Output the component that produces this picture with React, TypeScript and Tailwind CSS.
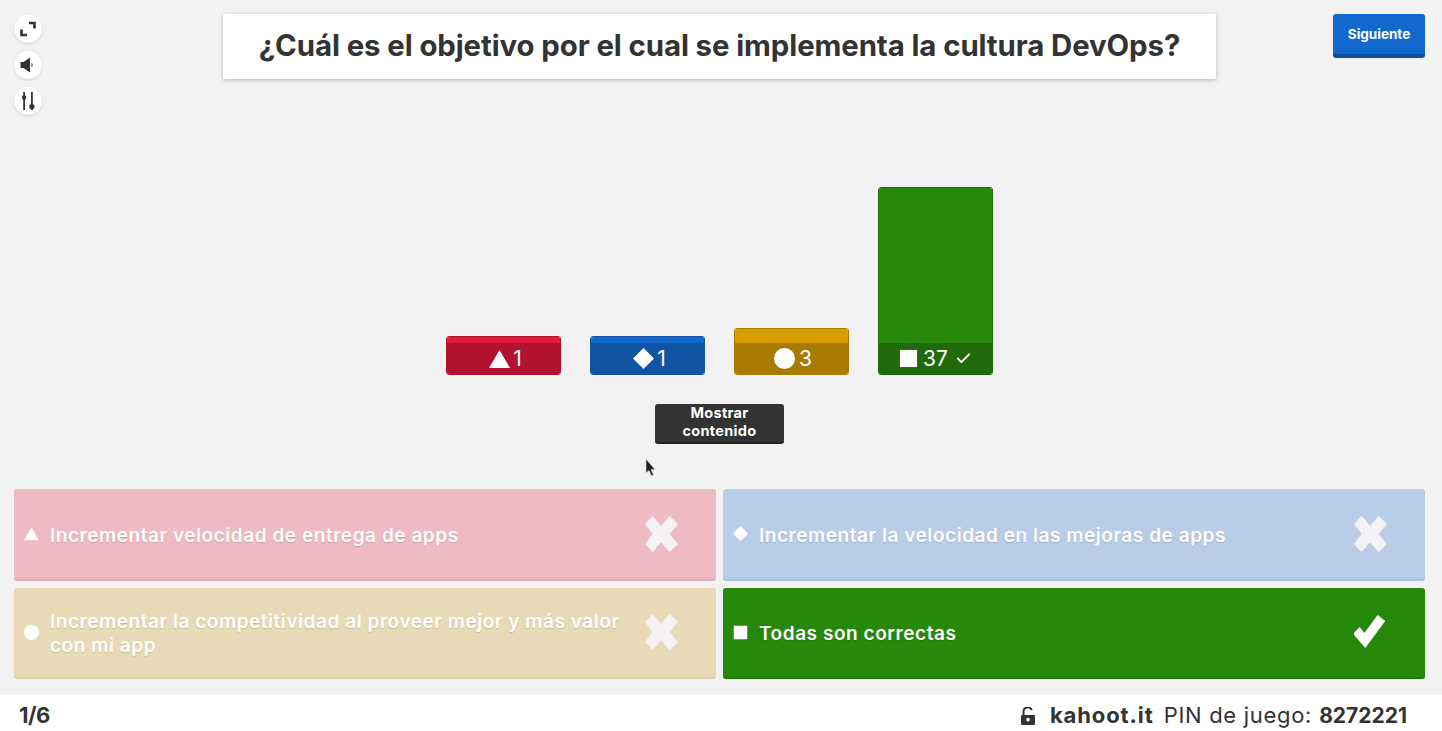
import { Check } from "lucide-react";

const font = "font-['Inter','Liberation_Sans',sans-serif]";

const bars = [
  { shape: "triangle", value: "1", height: "h-[39px]", border: "border-[#b0122f]", top: "bg-[#e21b3c]", strip: "bg-[#b0122f] gap-[3px] pl-[4px]", check: false },
  { shape: "diamond", value: "1", height: "h-[39px]", border: "border-[#1054a3]", top: "bg-[#1368ce]", strip: "bg-[#1054a3] gap-[3px] pl-[4px]", check: false },
  { shape: "circle", value: "3", height: "h-[47px]", border: "border-[#a87b00]", top: "bg-[#d89e00]", strip: "bg-[#a87b00] gap-[4px] pl-[3px]", check: false },
  { shape: "square", value: "37", height: "h-[188px]", border: "border-[#1c6a08]", top: "bg-[#26890c]", strip: "bg-[#216a0b] gap-[5px]", check: true },
];

const answers = [
  { shape: "triangle", text: "Incrementar velocidad de entrega de apps", bg: "bg-[#eebbc5]", edge: "border-[#e2b0ba]", correct: false },
  { shape: "diamond", text: "Incrementar la velocidad en las mejoras de apps", bg: "bg-[#bacde8]", edge: "border-[#afc1db]", correct: false },
  { shape: "circle", text: "Incrementar la competitividad al proveer mejor y más valor con mi app", bg: "bg-[#e9dab7]", edge: "border-[#ddcfad]", correct: false },
  { shape: "square", text: "Todas son correctas", bg: "bg-[#26890c]", edge: "border-[#217a0a]", correct: true },
];

function Shape({ type, size }: { type: string; size: number }) {
  return (
    <svg width={size} height={size} viewBox="0 0 20 20" fill="white" className="shrink-0">
      {type === "triangle" && <path d="M10 2 L20 19 L0 19 Z" />}
      {type === "diamond" && <path d="M10 0 L20 10 L10 20 L0 10 Z" />}
      {type === "circle" && <circle cx="10" cy="10" r="10" />}
      {type === "square" && <rect x="1" y="1" width="18" height="18" />}
    </svg>
  );
}

function RoundIcon({ children }: { children: React.ReactNode }) {
  return (
    <div className="flex h-[28px] w-[28px] items-center justify-center rounded-full bg-white shadow-[0_1px_3px_rgba(0,0,0,0.15)]">
      {children}
    </div>
  );
}

export default function App() {
  return (
    <div className={`relative flex h-[731px] w-full flex-col overflow-hidden bg-[#f2f2f3] text-[#333333] ${font}`}>
      <div className="flex flex-1 flex-col pl-[14px] pr-[17px] pt-[15px]">
        {/* Header */}
        <div className="grid h-[101px] grid-cols-[209px_993px_1fr] items-start">
          <div className="flex flex-col gap-[8px]">
            <RoundIcon>
              <svg width="16" height="16" viewBox="0 0 16 16" fill="none" stroke="#333" strokeWidth="2.6">
                <path d="M9 2 H14.5 V7.5" />
                <path d="M7 14 H1.5 V8.5" />
              </svg>
            </RoundIcon>
            <RoundIcon>
              <svg width="16" height="16" viewBox="0 0 16 16" fill="#333">
                <path d="M0.5 5 H3.5 L10 0.5 V15.5 L3.5 11 H0.5 Z" />
                <path d="M11.5 5.5 Q13.8 8 11.5 10.5 Z" />
              </svg>
            </RoundIcon>
            <RoundIcon>
              <svg width="18" height="20" viewBox="0 0 18 20" fill="#333">
                <rect x="4.2" y="1" width="1.8" height="18" />
                <circle cx="5.1" cy="6.5" r="2.2" />
                <rect x="12" y="1" width="1.8" height="18" />
                <circle cx="12.9" cy="15.5" r="2.6" />
              </svg>
            </RoundIcon>
          </div>
          <div className="-mt-px flex h-[65px] items-center justify-center bg-white shadow-[0_1px_4px_rgba(0,0,0,0.25)]">
            <h1 className="text-[29.4px] font-bold tracking-[-0.1px] text-[#333333]">
              ¿Cuál es el objetivo por el cual se implementa la cultura DevOps?
            </h1>
          </div>
          <div className="-mt-px flex justify-end">
            <button className="h-[44px] w-[92px] rounded-[3px] border-b-[4px] border-[#0f4fa0] bg-[#1368ce] pt-[1px] text-[13.5px] font-bold text-white">
              Siguiente
            </button>
          </div>
        </div>

        {/* Chart */}
        <div className="mt-[71px] flex h-[188px] items-end justify-center gap-[29px]">
          {bars.map((bar, i) => (
            <div
              key={i}
              className={`flex w-[115px] flex-col overflow-hidden rounded-[3px] border ${bar.height} ${bar.border}`}
            >
              <div className={`flex-1 ${bar.top}`} />
              <div className={`flex h-[31px] items-center justify-center text-[21px] text-white ${bar.strip}`}>
                <Shape type={bar.shape} size={bar.shape === "square" ? 19 : 21} />
                <span>{bar.value}</span>
                {bar.check && <Check size={17} strokeWidth={2.5} className="ml-[2px]" />}
              </div>
            </div>
          ))}
        </div>

        {/* Show content */}
        <div className="mt-[29px] flex justify-center">
          <button className="flex h-[40px] w-[129px] flex-col items-center justify-center rounded-[3px] border-b-2 border-[#222222] bg-[#333333] pb-[3px] text-[14.5px] font-bold leading-[18px] tracking-[0.3px] text-white">
            <span>Mostrar</span>
            <span>contenido</span>
          </button>
        </div>

        {/* Answers */}
        <div className="mt-[45px] grid grid-cols-2 gap-x-[7px] gap-y-[7px]">
          {answers.map((answer, i) => (
            <div
              key={i}
              className={`flex h-[91.5px] items-center rounded-[3px] border-b-2 pl-[10px] ${answer.bg} ${answer.edge}`}
            >
              <Shape type={answer.shape} size={15} />
              <span className="ml-[11px] w-[575px] pt-[4px] text-[19px] font-semibold leading-[24px] tracking-[0.55px] text-white [text-shadow:0_1px_1px_rgba(0,0,0,0.15)]">
                {answer.text}
              </span>
              <svg
                width="34"
                height="36"
                viewBox="0 0 36 36"
                preserveAspectRatio="none"
                className="ml-[20px] shrink-0"
                fill="#f4f2f5"
              >
                {answer.correct ? (
                  <path d="M-1 20 L6 13 L11 19 L25 1 L33 7 L12 34 Z" fill="white" />
                ) : (
                  <path
                    d="M8 1 L17 11 L26 1 L34 8 L25 18 L34 28 L26 35 L17 25 L8 35 L1 28 L9 18 L1 8 Z"
                    strokeWidth="1.5"
                    strokeLinejoin="round"
                    stroke="#f4f2f5"
                  />
                )}
              </svg>
            </div>
          ))}
        </div>
      </div>

      {/* Footer */}
      <div className="flex h-[36px] items-center justify-between bg-white pl-[19px] pr-[35px] pt-[5px] text-[#333333]">
        <span className="text-[22px] font-bold tracking-[-0.5px]">1/6</span>
        <div className="flex items-center text-[22px]">
          <svg width="14" height="18" viewBox="0 0 14 18" fill="#333" className="mr-[15px]">
            <path d="M1 8 H13 a1 1 0 0 1 1 1 V16.5 a1.5 1.5 0 0 1 -1.5 1.5 H1.5 A1.5 1.5 0 0 1 0 16.5 V9 a1 1 0 0 1 1 -1 Z M7 10.8 a1.8 1.8 0 1 0 0.01 0 Z" fillRule="evenodd" />
            <path d="M2.5 8 V4.5 a4.2 4.2 0 0 1 8.2 -1.2" fill="none" stroke="#333" strokeWidth="2" />
          </svg>
          <span className="font-bold tracking-[0.9px]">kahoot.it</span>
          <span className="ml-[10px] tracking-[0.7px]">PIN de juego:</span>
          <span className="ml-[7px] text-[21px] font-bold">8272221</span>
        </div>
      </div>

      {/* Cursor */}
      <svg width="12" height="19" viewBox="0 0 12 19" className="absolute left-[645px] top-[459px]">
        <path d="M1 0 L1 14 L4 11.5 L6.5 17 L8.5 16 L6 10.5 L10 10.5 Z" fill="#222" stroke="#ddd" strokeWidth="0.6" />
      </svg>
    </div>
  );
}
